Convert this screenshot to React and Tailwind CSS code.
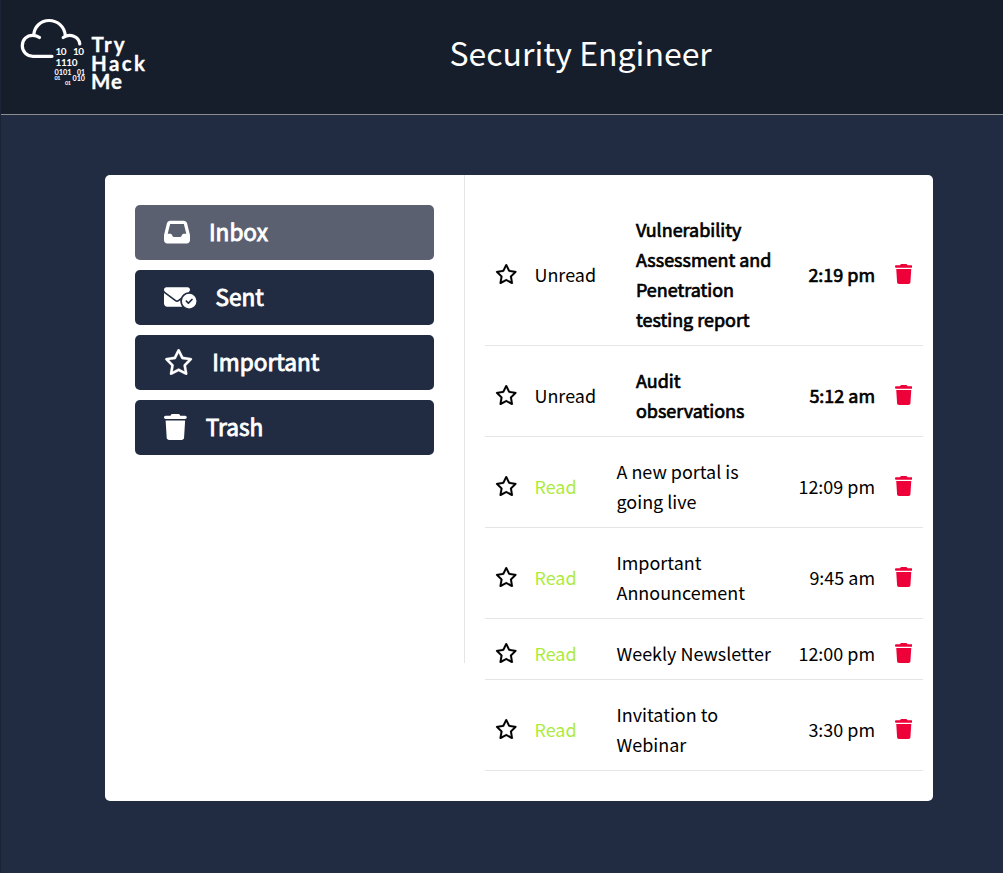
import { FaInbox, FaEnvelopeCircleCheck, FaRegStar, FaTrash } from "react-icons/fa6";

const folders = [
  { label: "Inbox", icon: FaInbox, size: "w-[26px]", active: true },
  { label: "Sent", icon: FaEnvelopeCircleCheck, size: "w-[32.5px]" },
  { label: "Important", icon: FaRegStar, size: "w-[29.25px] [stroke-width:4]" },
  { label: "Trash", icon: FaTrash, size: "w-[22.75px]" },
];

const mails = [
  { subject: "Vulnerability Assessment and Penetration testing report", time: "2:19 pm", unread: true },
  { subject: "Audit observations", time: "5:12 am", unread: true },
  { subject: "A new portal is going live", time: "12:09 pm" },
  { subject: "Important Announcement", time: "9:45 am" },
  { subject: "Weekly Newsletter", time: "12:00 pm" },
  { subject: "Invitation to Webinar", time: "3:30 pm" },
];

function Logo() {
  return (
    <svg width="130" height="76" viewBox="18 17 130 76" fill="none" aria-label="TryHackMe">
      <g stroke="#fff" strokeWidth="3.2" strokeLinecap="round" strokeLinejoin="round">
        <path d="M52 56.300H33C26.500 56.300 22.300 51.500 22.300 45.800C22.300 39.500 27 35.300 32.500 35.300C35.500 35.300 37.800 36 39.500 37.500" />
        <path d="M33.800 34.500C34.500 26.500 41 20.500 49 20.500C57.500 20.500 64.500 26.500 65.300 35.500" />
        <path d="M63.200 37.500C70 33 79 36.500 79.800 44" />
      </g>
      <g fill="#fff" fontFamily="Lato, sans-serif" fontWeight="700">
        <text x="55.500" y="55" fontSize="10" textLength="11">10</text>
        <text x="73" y="55" fontSize="10" textLength="11">10</text>
        <text x="55.500" y="66" fontSize="10" textLength="22">1110</text>
        <text x="54.500" y="74.500" fontSize="7" textLength="17" lengthAdjust="spacingAndGlyphs">0101</text>
        <text x="77" y="74.500" fontSize="7" textLength="8" lengthAdjust="spacingAndGlyphs">01</text>
        <text x="54.500" y="80" fontSize="5.500" textLength="6">01</text>
        <text x="72.500" y="80.500" fontSize="7" textLength="12.500" lengthAdjust="spacingAndGlyphs">010</text>
        <text x="65" y="85" fontSize="5.500" textLength="6">01</text>
        <g stroke="#fff" strokeWidth="0.3">
          <text x="91.500" y="52.300" fontSize="20.500" textLength="33">Try</text>
          <text x="91" y="71" fontSize="20.500" textLength="54">Hack</text>
          <text x="91" y="88.700" fontSize="20.500" textLength="31">Me</text>
        </g>
      </g>
    </svg>
  );
}

function Folder({ label, icon: Icon, size, active }) {
  return (
    <button
      className={`flex h-[55px] w-full items-center gap-[19px] rounded-[5px] pb-[2px] pl-[29px] text-[22.6px] text-white ${
        active ? "bg-[#5a606f]" : "bg-[#212c42]"
      }`}
    >
      <Icon className={`h-[26px] shrink-0 ${size}`} />
      <span className="pt-[2px] leading-none [-webkit-text-stroke:0.9px_white]">{label}</span>
    </button>
  );
}

function Mail({ subject, time, unread }) {
  const weight = unread ? "[-webkit-text-stroke:0.7px_black]" : "";
  return (
    <li className="flex items-center border-b border-[#e4e5e7] pt-5 pr-[11px] pb-[10px] pl-[9.5px] text-[17.95px] leading-[30px] text-black">
      <FaRegStar className="-mt-px mb-px h-5 w-[22.5px] shrink-0 [stroke-width:4]" />
      <span className={`-mt-px mb-px ml-[17.5px] shrink-0 ${unread ? "w-[101.5px]" : "w-[82px] text-[#adeb3b]"}`}>
        {unread ? "Unread" : "Read"}
      </span>
      <span className={`-mt-px mb-px shrink-0 ${unread ? "w-[140px]" : "w-[160px]"} ${weight}`}>{subject}</span>
      <span className={`-mt-px mb-px ml-auto whitespace-nowrap ${weight}`}>{time}</span>
      <FaTrash className="-mt-px mb-px ml-[19.5px] h-5 w-[17.5px] shrink-0 text-[#ee0038]" />
    </li>
  );
}

export default function App() {
  return (
    <div className="min-h-[873px] border-l border-[#1b2436] bg-[#212c42] font-['Noto_Sans_CJK_SC','Noto_Sans',sans-serif]">
      <header className="flex h-[115px] border-b border-[#8d8e8f] bg-[#161d2b]">
        <div className="w-[448.5px] pt-[17px] pl-[17px]">
          <Logo />
        </div>
        <h1 className="pt-[27px] text-[32px] leading-[50px] text-white">Security Engineer</h1>
      </header>
      <main className="mt-[60px] ml-[104px] flex h-[626px] w-[828px] rounded-[5px] bg-white">
        <nav className="flex h-[488px] w-[360px] flex-col gap-[10px] border-r border-[#e4e5e7] p-[30px]">
          {folders.map((f) => (
            <Folder key={f.label} {...f} />
          ))}
        </nav>
        <ul className="ml-5 w-[438px] pt-5">
          {mails.map((m) => (
            <Mail key={m.subject} {...m} />
          ))}
        </ul>
      </main>
    </div>
  );
}
